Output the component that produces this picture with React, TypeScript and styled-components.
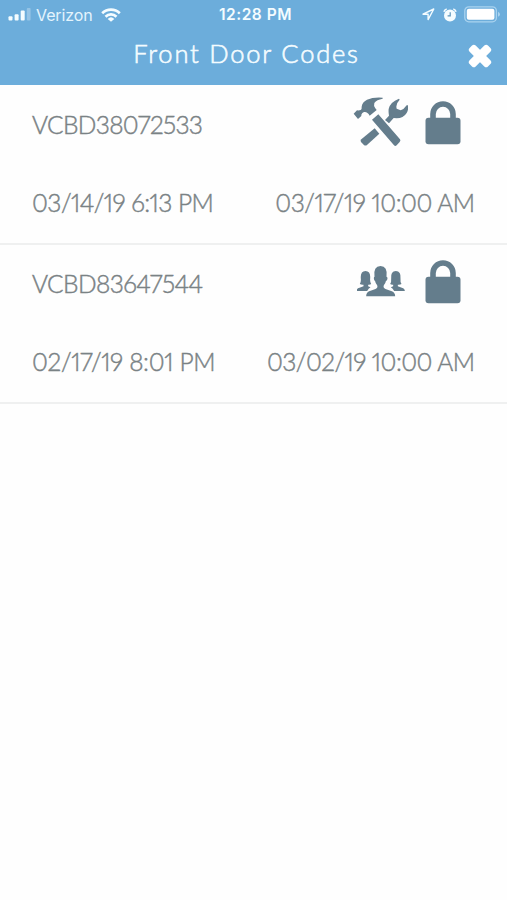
import React from "react";
import styled, { createGlobalStyle } from "styled-components";

const Global = createGlobalStyle`
  *, *::before, *::after { box-sizing: border-box; }
  body { margin: 0; background: #fefefe; font-family: Lato, "Open Sans", sans-serif; }
  svg { display: block; flex: none; }
`;

const Screen = styled.main`
  min-height: 900px;
  background: #fefefe;
`;

const Header = styled.header`
  height: 85px;
  background: #6caddb;
  color: #f4fcff;
`;

const StatusBar = styled.div`
  display: grid;
  grid-template-columns: 1fr auto 1fr;
  align-items: center;
  height: 29px;
  padding: 0 6px 0 8px;
`;

const StatusGroup = styled.div<{ $end?: boolean }>`
  display: flex;
  align-items: center;
  justify-content: ${(p) => (p.$end ? "flex-end" : "flex-start")};
`;

const AlertIcons = styled.div`
  display: flex;
  align-items: center;
  gap: 8px;
  margin-right: 7px;
`;

const Carrier = styled.span`
  margin: 0 8px 0 5px;
  font: 400 16px/20px Inter, sans-serif;
  letter-spacing: -0.1px;
  color: #e4f4fd;
`;

const Clock = styled.time`
  padding-left: 2px;
  font: 600 15.5px/20px Inter, sans-serif;
  letter-spacing: 0.5px;
`;

const TitleBar = styled.div`
  display: grid;
  grid-template-columns: 40px 1fr 40px;
  align-items: center;
  height: 53px;
`;

const Title = styled.h1`
  margin: 0 0 5px 0;
  padding-right: 14px;
  text-align: center;
  white-space: nowrap;
  font-size: 25.5px;
  font-weight: 300;
  -webkit-text-stroke: 0.6px currentColor;
  line-height: 32px;
  letter-spacing: 1.8px;
`;

const CloseButton = styled.button`
  display: flex;
  padding: 0;
  margin-left: 1px;
  border: 0;
  background: none;
  color: #fff;
`;

const Row = styled.article`
  display: flex;
  flex-direction: column;
  justify-content: space-between;
  height: 160px;
  padding: 9px 32px 25px;
  border-bottom: 2px solid #eff0f0;

  & + & {
    height: 159px;
    padding: 8px 32px 25px;
  }
`;

const Line = styled.div`
  display: flex;
  align-items: center;
  justify-content: space-between;
`;

const Label = styled.span<{ $spacing: number }>`
  padding-top: 4px;
  font-size: 24.5px;
  font-weight: 300;
  font-variant-numeric: proportional-nums;
  -webkit-text-stroke: 0.45px currentColor;
  line-height: 30px;
  letter-spacing: ${(p) => p.$spacing}px;
  margin-right: ${(p) => -p.$spacing}px;
  color: #7a8285;
  white-space: nowrap;
`;

const CodeLine = styled(Line)`
  ${Label} {
    padding-top: 6px;
  }
`;

const Icons = styled.div`
  display: flex;
  align-items: center;
  gap: 17px;
  padding-right: 14px;
  color: #647d8c;
`;

const Signal = () => (
  <svg width="23" height="13" viewBox="0 0 23 13" fill="currentColor">
    <rect x="0.5" y="8.2" width="4" height="4.3" rx="1" />
    <rect x="6.6" y="6.2" width="4" height="6.3" rx="1" />
    <rect x="12.7" y="2.6" width="4" height="9.9" rx="1" />
    <rect x="18.8" y="0" width="3.8" height="12.5" rx="1" opacity="0.3" />
  </svg>
);

const Wifi = () => (
  <svg width="20" height="14" viewBox="0 0 20 14" fill="none" stroke="currentColor" strokeWidth="2.7">
    <path d="M1.2 5.2a12.6 12.6 0 0 1 17.6 0" />
    <path d="M4.5 8.7a7.9 7.9 0 0 1 11 0" />
    <path d="M10 13.8 6.7 10.9a4.8 4.8 0 0 1 6.6 0z" fill="currentColor" stroke="none" />
  </svg>
);

const Location = () => (
  <svg width="13" height="13" viewBox="0 0 13 13" fill="none" stroke="currentColor" strokeWidth="1.4" strokeLinejoin="round">
    <path d="M11.8 1 1 6.2h5.1v5.4z" />
  </svg>
);

const Alarm = () => (
  <svg width="14" height="14" viewBox="0 0 14 14">
    <path d="M.9 3.7A4 4 0 0 1 3.7 1M10.3 1a4 4 0 0 1 2.8 2.7" fill="none" stroke="currentColor" strokeWidth="1.5" />
    <circle cx="7" cy="7.5" r="6" fill="currentColor" />
    <path d="M7.2 4.3v3.5H4.6" fill="none" stroke="#5c94bb" strokeWidth="1.2" />
  </svg>
);

const Battery = () => (
  <svg width="37" height="17" viewBox="0 0 37 17">
    <rect x="0.8" y="0.8" width="31.6" height="15" rx="4" fill="none" stroke="#a9d3ef" strokeWidth="1.3" />
    <rect x="2.8" y="2.8" width="27.6" height="11" rx="2" fill="#fff" />
    <path d="M34 5.8q2 1 2 2.5t-2 2.5z" fill="#a9d3ef" />
  </svg>
);

const Close = () => (
  <svg width="24" height="24" viewBox="-12 -12 24 24" fill="currentColor">
    <rect x="-13" y="-4.3" width="26" height="8.6" rx="2.6" transform="rotate(45)" />
    <rect x="-13" y="-4.3" width="26" height="8.6" rx="2.6" transform="rotate(-45)" />
  </svg>
);

const Tools = () => (
  <svg width="55" height="50" viewBox="9 11 165 150" fill="currentColor">
    <path d="M11 61 21 51q6 1 11-1 4-2 3-10 1-13 16-21 18-8 47-6v3q-18 3-25 13-3 9 3 16l4 5-21 17q-7-13-17-11-6 2-8 8v4L24 77z" />
    <path d="M66 79 85 63 150 138q3 4-1 8l-9 10q-4 4-8 0z" />
    <path d="m74 105 14 16-37 34q-5 4-10-1l-8-8q-3-4 1-8z" />
    <path d="M105 80 117 67q-2-10-1-20 4-21 31-31l2 3q-13 13-9 27l12 5q10-3 18-15l3-1q4 12-3 24-10 16-30 16l-9-1-14 16z" />
  </svg>
);

const People = () => (
  <svg width="48" height="32" viewBox="14.5 21 144 96" fill="currentColor">
    <path d="M13 99q0-8 9-10l12-4v-5q-6 1-11-2 4-5 3-16-2-23 14-23t14 23q-1 11 3 16-4 3-9 2v5l7 3q-6 3-10 11z" />
    <path d="M158 99q0-8-9-10l-12-4v-5q6 1 11-2-4-5-3-16 2-23-14-23t-14 23q1 11-3 16 4 3 9 2v5l-7 3q6 3 10 11z" />
    <path d="M42 115q0-11 9-15l19-7q8-3 5-11-5-5-6-12-4-3-4-9 0-4 2-5-4-32 18-32t18 32q3 1 3 5 0 6-5 9-1 7-6 12-3 8 5 11l19 7q10 4 10 15z" />
  </svg>
);

const Lock = () => (
  <svg width="36" height="44" viewBox="0 0 36 44">
    <path d="M8 18v-5a10 10 0 0 1 20 0v5" fill="none" stroke="currentColor" strokeWidth="5.6" />
    <rect x="0.5" y="16.8" width="35" height="26.4" rx="3" fill="currentColor" />
  </svg>
);

const PurposeSlot = styled.span`
  display: flex;
  align-items: center;
  justify-content: center;
  width: 55px;
  height: 55px;
`;

const LockSlot = styled.span`
  margin-top: 2px;
`;

type Purpose = "tools" | "people";
type Text = { text: string; spacing: number };
const codes: { code: Text; purpose: Purpose; start: Text; end: Text }[] = [
  {
    code: { text: "VCBD38072533", spacing: -0.65 },
    purpose: "tools",
    start: { text: "03/14/19 6:13 PM", spacing: -0.55 },
    end: { text: "03/17/19 10:00 AM", spacing: -0.5 },
  },
  {
    code: { text: "VCBD83647544", spacing: -0.6 },
    purpose: "people",
    start: { text: "02/17/19 8:01 PM", spacing: -0.35 },
    end: { text: "03/02/19 10:00 AM", spacing: -0.55 },
  },
];

const Caption = ({ text, spacing }: Text) => <Label $spacing={spacing}>{text}</Label>;

export default function App() {
  return (
    <Screen>
      <Global />
      <Header>
        <StatusBar>
          <StatusGroup>
            <Signal />
            <Carrier>Verizon</Carrier>
            <Wifi />
          </StatusGroup>
          <Clock>12:28 PM</Clock>
          <StatusGroup $end>
            <AlertIcons>
              <Location />
              <Alarm />
            </AlertIcons>
            <Battery />
          </StatusGroup>
        </StatusBar>
        <TitleBar>
          <span />
          <Title>Front Door Codes</Title>
          <CloseButton aria-label="Close">
            <Close />
          </CloseButton>
        </TitleBar>
      </Header>
      {codes.map((c) => (
        <Row key={c.code.text}>
          <CodeLine>
            <Caption {...c.code} />
            <Icons>
              <PurposeSlot>{c.purpose === "tools" ? <Tools /> : <People />}</PurposeSlot>
              <LockSlot>
                <Lock />
              </LockSlot>
            </Icons>
          </CodeLine>
          <Line>
            <Caption {...c.start} />
            <Caption {...c.end} />
          </Line>
        </Row>
      ))}
    </Screen>
  );
}
